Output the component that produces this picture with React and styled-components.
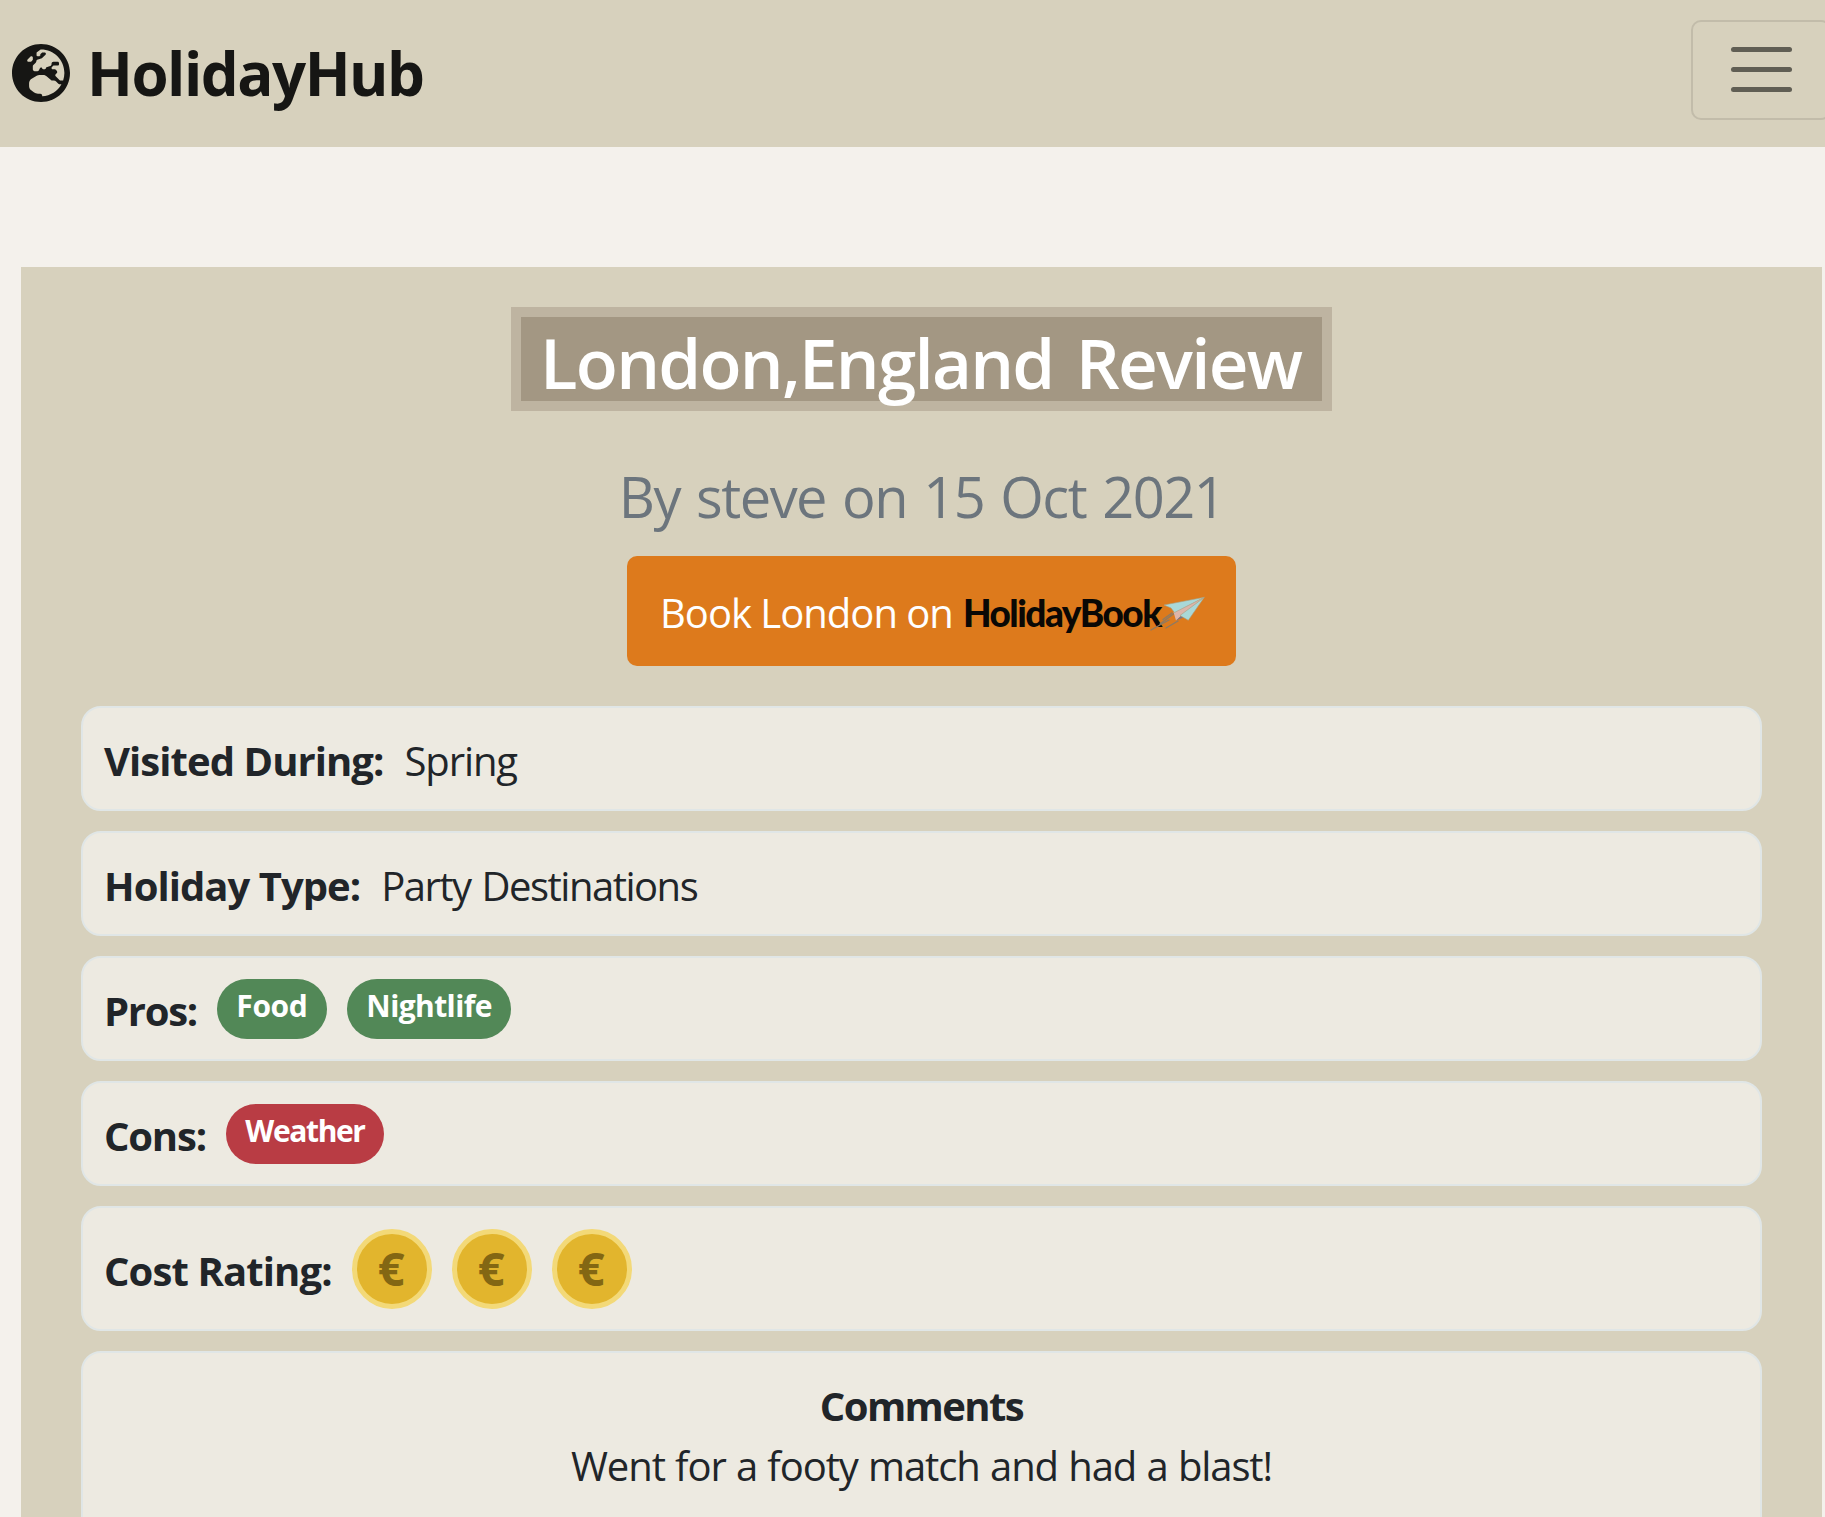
import React from 'react';
import styled, { createGlobalStyle } from 'styled-components';
import { FaGlobeEurope } from 'react-icons/fa';

const GlobalStyle = createGlobalStyle`
  *, *::before, *::after { box-sizing: border-box; }
  html, body { margin: 0; padding: 0; background: #f4f1ec; }
  body {
    font-family: "Open Sans", "Noto Sans", sans-serif;
    font-size: 40px;
    line-height: 60px;
    color: #212529;
  }
`;

const Page = styled.div`
  width: 100%;
  height: 1517px;
  overflow: hidden;
`;

const Navbar = styled.header`
  display: flex;
  justify-content: space-between;
  height: 147px;
  padding: 20px 0 0 12px;
  background: #d7d1bd;
`;

const Brand = styled.a`
  display: flex;
  align-items: center;
  gap: 17px;
  height: 105px;
  color: #161614;
  font-size: 60px;
  font-weight: 700;
  line-height: 90px;
  letter-spacing: -1.48px;
  white-space: nowrap;

  svg {
    width: 58px;
    height: 60px;
  }
`;

const BrandName = styled.span`
  padding-top: 1px;
`;

const Toggler = styled.button`
  display: flex;
  flex-direction: column;
  align-items: center;
  flex: none;
  gap: 15px;
  width: 140px;
  height: 100px;
  margin-right: -6px;
  padding: 25px 0 0;
  background: transparent;
  border: 2px solid #c2bcaa;
  border-radius: 10px;
`;

const TogglerBar = styled.span`
  width: 61px;
  height: 5px;
  border-radius: 2.5px;
  background: #605e54;
`;

const Panel = styled.main`
  display: flex;
  flex-direction: column;
  align-items: center;
  height: 1400px;
  margin: 120px 3px 0 21px;
  padding: 40px 60px 0 60px;
  background: #d7d1bd;
`;

const Title = styled.h1`
  width: 821px;
  height: 104px;
  margin: 0;
  padding: 3px 0 0 19px;
  border: 10px solid #beb4a1;
  background: #a39783;
  color: #fff;
  font-size: 69px;
  font-weight: 650;
  line-height: 84px;
  letter-spacing: -1.73px;
  word-spacing: 6px;
  white-space: nowrap;
`;

const Byline = styled.p`
  margin: 51px 0 26px;
  color: #6c757d;
  font-size: 56px;
  line-height: 68px;
  letter-spacing: -1.5px;
  word-spacing: 3px;
  white-space: nowrap;
`;

const BookButton = styled.a`
  display: flex;
  align-items: flex-start;
  flex: none;
  width: 609px;
  height: 110px;
  margin: 0 0 40px 20px;
  padding: 27px 0 0 33px;
  border-radius: 10px;
  background: #dd7a1c;
  color: #fff;
  letter-spacing: -1px;
  white-space: nowrap;
`;

const BookLogo = styled.span`
  display: flex;
  align-items: flex-start;
  margin-left: 10px;
  color: #0a0805;
  font-family: Lato, "Open Sans", sans-serif;
  font-size: 37px;
  font-weight: 900;
  letter-spacing: -1.5px;

  svg {
    flex: none;
    width: 56px;
    height: 38px;
    margin: 12px 0 0 -11px;
  }
`;

const Details = styled.section`
  display: flex;
  flex-direction: column;
  align-self: stretch;
  gap: 20px;
`;

const Row = styled.div`
  display: flex;
  align-items: flex-start;
  height: ${(p) => p.$height || 105}px;
  padding: 21px 20px 0 21px;
  border: 2px solid #e0e6e6;
  border-radius: 20px;
  background: #edeae1;
`;

const Label = styled.strong`
  margin: ${(p) => p.$top || 2}px ${(p) => p.$gap || 21}px 0 0;
  font-weight: 700;
  letter-spacing: ${(p) => p.$spacing || -0.94}px;
  white-space: nowrap;
`;

const Value = styled.span`
  margin-top: ${(p) => (p.$flush ? 0 : 2)}px;
  letter-spacing: ${(p) => p.$spacing || -1.1}px;
  word-spacing: ${(p) => p.$words || 0}px;
  white-space: nowrap;
`;

const Pills = styled.div`
  display: flex;
  gap: 20px;
`;

const Pill = styled.span`
  height: 60px;
  padding: 12px 19.5px 0;
  border-radius: 30px;
  background: ${(p) => (p.$tone === 'bad' ? '#b93c44' : '#528857')};
  color: #fff;
  font-size: 30px;
  font-weight: 700;
  line-height: 30px;
  letter-spacing: ${(p) => p.$spacing || -0.4}px;
  white-space: nowrap;
`;

const Coins = styled.div`
  display: flex;
  gap: 20px;
`;

const Coin = styled.span`
  width: 80px;
  height: 80px;
  padding-right: 1px;
  border: 5px solid #f3d978;
  border-radius: 50%;
  background: #e2b52d;
  color: #836713;
  font-size: 47px;
  font-weight: 700;
  line-height: 68px;
  text-align: center;
`;

const CommentBox = styled(Row)`
  flex-direction: column;
  align-items: center;
  padding: 23px 21px 0;
`;

const CommentHeading = styled.strong`
  font-weight: 700;
  letter-spacing: -1.58px;
`;

const PaperPlane = () => (
  <svg viewBox="0 0 56 38" aria-hidden="true">
    <g fill="none" stroke="#8a7a66" strokeWidth="1.3" strokeLinecap="round">
      <path d="M1 35 L9 30.5 L19 25" />
      <path d="M10 29 L24 18.5" />
      <path d="M16 33 L28 26" />
      <path d="M13 24.5 L22 18" />
    </g>
    <path d="M54.3 2.3 L23.5 17 L26 25.5 L31 21 Z" fill="#ddb5a9" />
    <path d="M26 25.5 L31 21 L33.5 22.5 Z" fill="#77758a" />
    <path d="M14 10 L54.3 2.3 L24.5 17.5 L21 13 Z" fill="#a9d8d8" stroke="#a99d7d" strokeWidth=".6" />
    <path d="M54.3 2.3 L38.3 25.3 L30 20.5 Z" fill="#a9d8d8" stroke="#a99d7d" strokeWidth=".6" />
  </svg>
);

export default function App() {
  return (
    <Page>
      <GlobalStyle />
      <Navbar>
        <Brand>
          <FaGlobeEurope />
          <BrandName>HolidayHub</BrandName>
        </Brand>
        <Toggler aria-label="Toggle navigation">
          <TogglerBar />
          <TogglerBar />
          <TogglerBar />
        </Toggler>
      </Navbar>
      <Panel>
        <Title>London,England Review</Title>
        <Byline>By steve on 15 Oct 2021</Byline>
        <BookButton>
          <span>Book London on</span>
          <BookLogo>
            HolidayBook
            <PaperPlane />
          </BookLogo>
        </BookButton>
        <Details>
          <Row>
            <Label>Visited During:</Label>
            <Value>Spring</Value>
          </Row>
          <Row>
            <Label $spacing={-0.96}>Holiday Type:</Label>
            <Value $spacing={-1.5} $words={2}>Party Destinations</Value>
          </Row>
          <Row>
            <Label $gap={20} $spacing={-1.3}>Pros:</Label>
            <Pills>
              <Pill>Food</Pill>
              <Pill $spacing={-0.6}>Nightlife</Pill>
            </Pills>
          </Row>
          <Row>
            <Label $gap={20} $spacing={-1.2}>Cons:</Label>
            <Pills>
              <Pill $tone="bad" $spacing={-1.39}>Weather</Pill>
            </Pills>
          </Row>
          <Row $height={125}>
            <Label $top={12} $gap={20} $spacing={-0.88}>Cost Rating:</Label>
            <Coins>
              <Coin>€</Coin>
              <Coin>€</Coin>
              <Coin>€</Coin>
            </Coins>
          </Row>
          <CommentBox $height={240}>
            <CommentHeading>Comments</CommentHeading>
            <Value $flush $spacing={-1.1} $words={1}>Went for a footy match and had a blast!</Value>
          </CommentBox>
        </Details>
      </Panel>
    </Page>
  );
}
